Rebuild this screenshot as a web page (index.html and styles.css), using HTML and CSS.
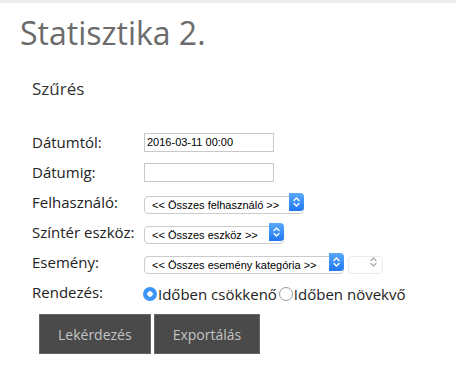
FILE: index.html
```html
<!DOCTYPE html>
<html>

<head>
    <meta charset="UTF-8">
    <title>Statisztika 2.</title>
    <link rel="stylesheet" href="styles.css">
</head>

<body>

    <div class="topbar"></div>

    <h1>Statisztika 2.</h1>

    <div class="filter">
        <h2>Szűrés</h2>

        <form class="filter-form" action="/statisztika" method="POST">
            <div class="row">
                <label for="dateFrom">Dátumtól:</label>
                <input type="text" id="dateFrom" name="date_from" value="2016-03-11 00:00">
            </div>
            <div class="row">
                <label for="dateTo">Dátumig:</label>
                <input type="text" id="dateTo" name="date_to">
            </div>
            <div class="row">
                <label for="user">Felhasználó:</label>
                <div class="select select-user">
                    <select id="user" name="user">
                        <option>&lt;&lt; Összes felhasználó &gt;&gt;</option>
                    </select>
                    <span class="arrow">
                        <svg width="15" height="18" viewBox="0 0 15 18"><path d="M5 7.5 L7.5 5 L10 7.5 M5 10.5 L7.5 13 L10 10.5" fill="none" stroke="#fff" stroke-width="1.4" stroke-linecap="round" stroke-linejoin="round"/></svg>
                    </span>
                </div>
            </div>
            <div class="row">
                <label for="device">Színtér eszköz:</label>
                <div class="select select-device">
                    <select id="device" name="device">
                        <option>&lt;&lt; Összes eszköz &gt;&gt;</option>
                    </select>
                    <span class="arrow">
                        <svg width="15" height="18" viewBox="0 0 15 18"><path d="M5 7.5 L7.5 5 L10 7.5 M5 10.5 L7.5 13 L10 10.5" fill="none" stroke="#fff" stroke-width="1.4" stroke-linecap="round" stroke-linejoin="round"/></svg>
                    </span>
                </div>
            </div>
            <div class="row">
                <label for="event">Esemény:</label>
                <div class="select select-event">
                    <select id="event" name="event_category">
                        <option>&lt;&lt; Összes esemény kategória &gt;&gt;</option>
                    </select>
                    <span class="arrow">
                        <svg width="15" height="18" viewBox="0 0 15 18"><path d="M5 7.5 L7.5 5 L10 7.5 M5 10.5 L7.5 13 L10 10.5" fill="none" stroke="#fff" stroke-width="1.4" stroke-linecap="round" stroke-linejoin="round"/></svg>
                    </span>
                </div>
                <div class="select select-small">
                    <select name="event" disabled></select>
                    <span class="arrow">
                        <svg width="15" height="18" viewBox="0 0 15 18"><path d="M5 7.5 L7.5 5 L10 7.5 M5 10.5 L7.5 13 L10 10.5" fill="none" stroke="#aaa" stroke-width="1.3" stroke-linecap="round" stroke-linejoin="round"/></svg>
                    </span>
                </div>
            </div>
            <div class="row">
                <label>Rendezés:</label>
                <div class="radios">
                    <label class="radio"><input type="radio" name="order" value="desc" checked>Időben csökkenő</label>
                    <label class="radio"><input type="radio" name="order" value="asc">Időben növekvő</label>
                </div>
            </div>
        </form>

        <div class="actions">
            <button type="button">Lekérdezés</button>
            <button type="button">Exportálás</button>
        </div>
    </div>

</body>

</html>
```

FILE: styles.css
```css
body {
    margin: 0;
    padding: 0;
    font-family: "Open Sans", sans-serif;
    background-color: #ffffff;
    color: #222222;
}

.topbar {
    height: 3px;
    background-color: #ececec;
}

h1 {
    margin: 11px 0 0 20px;
    font-size: 32px;
    line-height: 38px;
    font-weight: normal;
    color: #6b6b6b;
}

.filter {
    padding-left: 32px;
}

h2 {
    margin: 25px 0 0 0;
    font-size: 17px;
    line-height: 23px;
    font-weight: normal;
    color: #333333;
}

.filter-form {
    margin-top: 27px;
}

.row {
    display: flex;
    align-items: center;
    height: 30px;
    font-size: 15px;
    line-height: 20px;
}

.row > label {
    width: 112px;
    flex-shrink: 0;
}

input[type="text"] {
    box-sizing: border-box;
    width: 130px;
    height: 19px;
    margin: 0;
    padding: 0 2px;
    border: 1px solid #c8c8c8;
    border-radius: 0;
    font-family: "Liberation Sans", Arial, sans-serif;
    font-size: 11px;
    color: #000000;
    outline: none;
}

.select {
    position: relative;
    height: 18px;
    box-sizing: border-box;
}

.select select {
    appearance: none;
    -webkit-appearance: none;
    box-sizing: border-box;
    width: 100%;
    height: 18px;
    margin: 0;
    padding: 0 0 0 7px;
    border: 1px solid #cccccc;
    border-radius: 4px;
    background-color: #ffffff;
    font-family: "Liberation Sans", Arial, sans-serif;
    font-size: 11px;
    color: #000000;
    outline: none;
}

.select .arrow {
    position: absolute;
    top: 0;
    right: 0;
    width: 15px;
    height: 18px;
    border-radius: 0 4px 4px 0;
    background: linear-gradient(to bottom, #5aa9fb, #1f77f2);
    pointer-events: none;
}

.select .arrow svg {
    display: block;
}

.select-user {
    width: 160px;
}

.select-device {
    width: 140px;
}

.select-event {
    width: 200px;
}

.select-small {
    width: 35px;
    margin-left: 4px;
}

.select-small select {
    border-color: #e2e2e2;
}

.select-small .arrow {
    right: 2px;
    background: none;
}

.radios {
    display: flex;
    align-items: center;
    padding-top: 3px;
}

.radio {
    display: flex;
    align-items: center;
    margin-right: 3px;
}

input[type="radio"] {
    appearance: none;
    -webkit-appearance: none;
    box-sizing: border-box;
    width: 14px;
    height: 14px;
    margin: 1px 1px 0 -1px;
    border: 1px solid #9a9a9a;
    border-radius: 50%;
    background-color: #ffffff;
}

input[type="radio"]:checked {
    border: none;
    background: radial-gradient(circle, #ffffff 0, #ffffff 2.5px, #3d95f7 3px);
}

.actions {
    display: flex;
    margin: 7px 0 0 7px;
}

button {
    height: 40px;
    margin-right: 3px;
    padding: 0 18px;
    background-color: #4a4a4a;
    color: #c4c4c4;
    border: 1px solid #666666;
    font-family: "Open Sans", sans-serif;
    font-size: 14px;
    cursor: pointer;
}
```
